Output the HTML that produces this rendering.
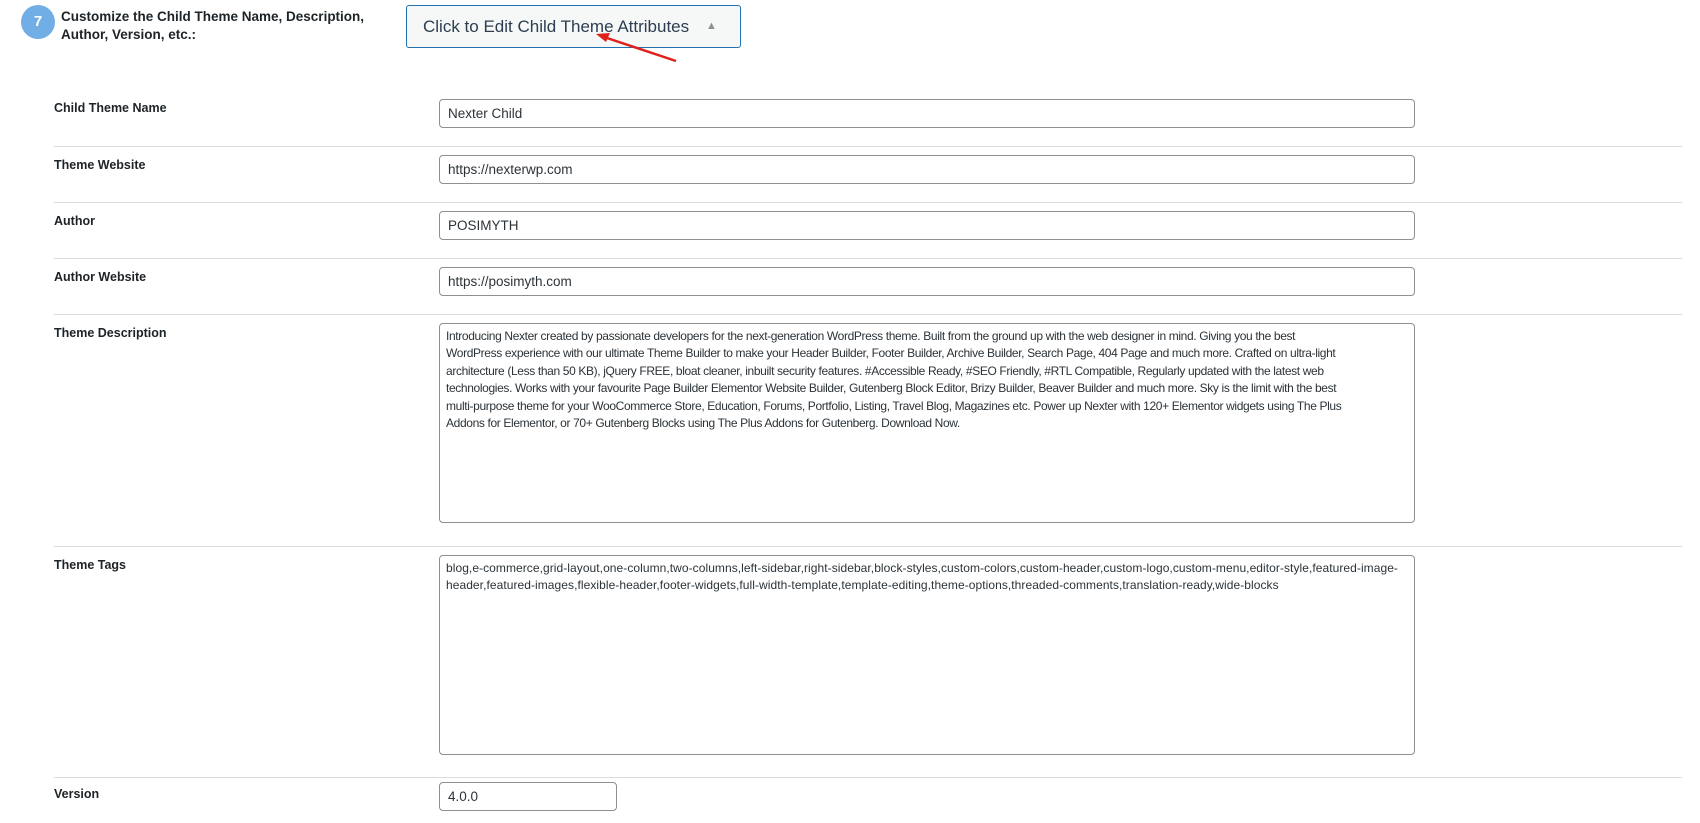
<!DOCTYPE html>
<html><head><meta charset="utf-8"><style>
*{box-sizing:border-box;margin:0;padding:0}
body{width:1700px;height:823px;background:#fff;position:relative;overflow:hidden;font-family:"Liberation Sans",sans-serif;color:#1d2327}
.a{position:absolute}
.lbl{position:absolute;left:54px;font-size:12.5px;font-weight:bold;color:#1d2327}
.sep{position:absolute;left:54px;width:1628px;height:1px;background:#dcdcde}
.inp{position:absolute;left:439px;width:976px;height:29px;border:1px solid #8c8f94;border-radius:4px;font-size:13.5px;padding:6px 8px;color:#2c3338;white-space:nowrap}
.ta{position:absolute;left:439px;width:976px;height:200px;border:1px solid #8c8f94;border-radius:4px;font-size:12px;line-height:17.4px;padding:4px 6px;color:#2c3338;white-space:pre;letter-spacing:-0.36px}
</style></head><body>
<div class="a" style="left:21px;top:5px;width:34px;height:34px;border-radius:50%;background:#72aee6;color:#fff;font-weight:bold;font-size:15px;text-align:center;line-height:34px">7</div>
<div class="a" style="left:61px;top:8px;font-size:13.5px;font-weight:bold;line-height:18px;width:330px">Customize the Child Theme Name, Description,<br>Author, Version, etc.:</div>
<div class="a" style="left:406px;top:5px;width:335px;height:43px;border:1px solid #2271b1;border-radius:3px;background:#f6f7f7;font-size:17px;color:#2c3e50;padding:11px 0 0 16px;white-space:nowrap">Click to Edit Child Theme Attributes<span style="position:absolute;left:299px;top:14px;font-size:11px;color:#8c8f94">▲</span></div>
<svg class="a" style="left:0;top:0" width="1700" height="823"><line x1="676" y1="61" x2="604" y2="37" stroke="#e0201a" stroke-width="2.5"/><polygon points="596,34 610,33 606,42" fill="#e0201a"/></svg>

<div class="lbl" style="top:101px">Child Theme Name</div>
<div class="inp" style="top:99px">Nexter Child</div>
<div class="sep" style="top:146px"></div>
<div class="lbl" style="top:158px">Theme Website</div>
<div class="inp" style="top:155px">https://nexterwp.com</div>
<div class="sep" style="top:202px"></div>
<div class="lbl" style="top:214px">Author</div>
<div class="inp" style="top:211px">POSIMYTH</div>
<div class="sep" style="top:258px"></div>
<div class="lbl" style="top:270px">Author Website</div>
<div class="inp" style="top:267px">https://posimyth.com</div>
<div class="sep" style="top:314px"></div>
<div class="lbl" style="top:326px">Theme Description</div>
<div class="ta" style="top:323px">Introducing Nexter created by passionate developers for the next-generation WordPress theme. Built from the ground up with the web designer in mind. Giving you the best
WordPress experience with our ultimate Theme Builder to make your Header Builder, Footer Builder, Archive Builder, Search Page, 404 Page and much more. Crafted on ultra-light
architecture (Less than 50 KB), jQuery FREE, bloat cleaner, inbuilt security features. #Accessible Ready, #SEO Friendly, #RTL Compatible, Regularly updated with the latest web
technologies. Works with your favourite Page Builder Elementor Website Builder, Gutenberg Block Editor, Brizy Builder, Beaver Builder and much more. Sky is the limit with the best
multi-purpose theme for your WooCommerce Store, Education, Forums, Portfolio, Listing, Travel Blog, Magazines etc. Power up Nexter with 120+ Elementor widgets using The Plus
Addons for Elementor, or 70+ Gutenberg Blocks using The Plus Addons for Gutenberg. Download Now.</div>
<div class="sep" style="top:546px"></div>
<div class="lbl" style="top:558px">Theme Tags</div>
<div class="ta" style="top:555px;letter-spacing:0.06px">blog,e-commerce,grid-layout,one-column,two-columns,left-sidebar,right-sidebar,block-styles,custom-colors,custom-header,custom-logo,custom-menu,editor-style,featured-image-
header,featured-images,flexible-header,footer-widgets,full-width-template,template-editing,theme-options,threaded-comments,translation-ready,wide-blocks</div>
<div class="sep" style="top:777px"></div>
<div class="lbl" style="top:787px">Version</div>
<div class="inp" style="top:782px;width:178px">4.0.0</div>
</body></html>
